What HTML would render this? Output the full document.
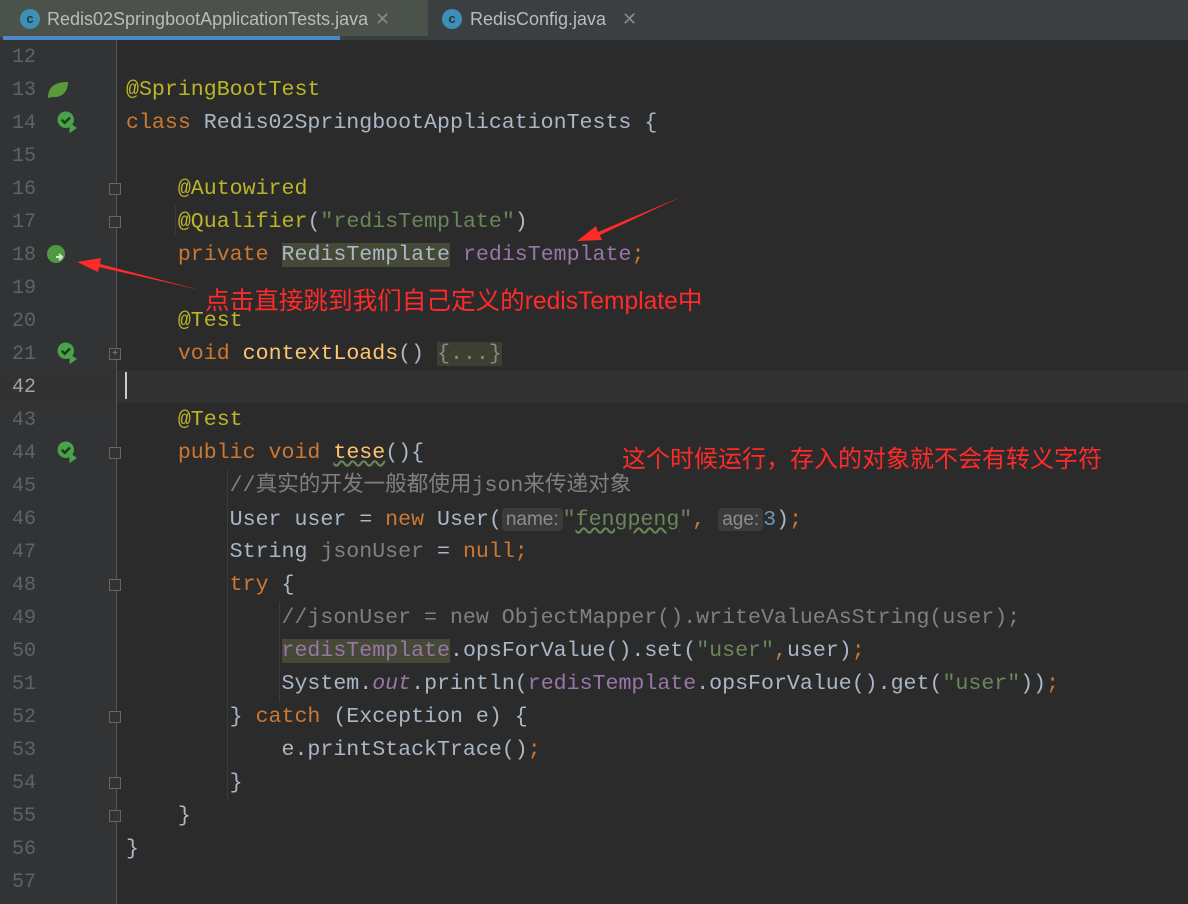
<!DOCTYPE html>
<html><head><meta charset="utf-8"><style>
body{margin:0;width:1188px;height:904px;background:#2b2b2b;overflow:hidden;position:relative;font-family:"Liberation Mono",monospace;}
#tabs{position:absolute;left:0;top:0;width:1188px;height:40px;background:#3c3f41;}
.tab{position:absolute;top:0;height:37px;font:18px "Liberation Sans",sans-serif;color:#bbbbbb;line-height:38px;}
.ic{position:absolute;top:9px;width:20px;height:20px;border-radius:50%;background:#3d8fb5;color:#1e3a4a;font:bold 13px "Liberation Sans";text-align:center;line-height:20px;}
#gut{position:absolute;left:0;top:40px;width:116px;height:864px;background:#313335;}
#div{position:absolute;left:116px;top:40px;width:1px;height:864px;background:#555;}
.ln{position:absolute;left:12px;width:40px;font-size:20px;color:#606366;line-height:33px;height:33px;}
.cl{position:absolute;left:126px;font-size:21.6px;line-height:33px;height:33px;white-space:pre;color:#a9b7c6;}
.k{color:#cc7832}.a{color:#bbb529}.s{color:#6a8759}.f{color:#ffc66d}.p{color:#9876aa}.c{color:#808080}.n{color:#6897bb}
.hint{background:#3b3b3b;color:#8c8c8c;font-family:"Liberation Sans",sans-serif;font-size:19px;border-radius:4px;padding:1px 4px;}
.red{position:absolute;color:#ff2a2a;font:24px "Liberation Sans","Noto Sans CJK SC",sans-serif;white-space:nowrap;}
.fold{position:absolute;left:109px;width:12px;height:12px;border:1px solid #666;box-sizing:border-box;background:#313335;}
.guide{position:absolute;width:1px;background:#3b3b3b;}
.run{position:absolute;left:56px;width:24px;height:24px;}
</style></head><body>
<div id="tabs">
 <div class="tab" style="left:0;width:428px;background:#4b514b;"><div class="ic" style="left:20px">c</div><span style="position:absolute;left:47px">Redis02SpringbootApplicationTests.java</span><span style="position:absolute;left:375px;color:#888">✕</span></div>
 <div style="position:absolute;left:3px;top:36px;width:337px;height:4px;background:#4a88c7"></div>
 <div class="tab" style="left:340px;width:300px;"><div class="ic" style="left:102px">c</div><span style="position:absolute;left:130px">RedisConfig.java</span><span style="position:absolute;left:282px;color:#888">✕</span></div>
</div>
<div style="position:absolute;left:340px;top:36px;width:848px;height:4px;background:#3c3f41"></div>
<div id="gut"></div>
<div style="position:absolute;left:0;top:370px;width:1188px;height:33px;background:#323232"></div>
<div id="div"></div>
<div style="position:absolute;left:125px;top:372px;width:2px;height:27px;background:#ccc"></div>
<div class="guide" style="left:175px;top:205px;height:30px"></div>
<div class="guide" style="left:227px;top:470px;height:330px"></div>
<div class="guide" style="left:279px;top:602px;height:100px"></div>
<div class="guide" style="left:227px;top:736px;height:40px"></div>

<div class="ln" style="top:41px">12</div><div class="ln" style="top:74px">13</div><div class="ln" style="top:107px">14</div><div class="ln" style="top:140px">15</div><div class="ln" style="top:173px">16</div><div class="ln" style="top:206px">17</div><div class="ln" style="top:239px">18</div><div class="ln" style="top:272px">19</div><div class="ln" style="top:305px">20</div><div class="ln" style="top:338px">21</div><div class="ln" style="top:371px;color:#a4a3a3">42</div><div class="ln" style="top:404px">43</div><div class="ln" style="top:437px">44</div><div class="ln" style="top:470px">45</div><div class="ln" style="top:503px">46</div><div class="ln" style="top:536px">47</div><div class="ln" style="top:569px">48</div><div class="ln" style="top:602px">49</div><div class="ln" style="top:635px">50</div><div class="ln" style="top:668px">51</div><div class="ln" style="top:701px">52</div><div class="ln" style="top:734px">53</div><div class="ln" style="top:767px">54</div><div class="ln" style="top:800px">55</div><div class="ln" style="top:833px">56</div><div class="ln" style="top:866px">57</div>

<svg style="position:absolute;left:46px;top:80px" width="24" height="20"><path d="M2 18 C2 6 10 2 22 2 C22 12 16 18 6 17 Z" fill="#5a9a3c"/></svg>
<svg class="run" style="top:110px" viewBox="0 0 16 16"><circle cx="6.5" cy="6.5" r="5.5" fill="#4aa34a"/><path d="M3.8 6.5l2 2 3.5-3.5" stroke="#1e3a1e" stroke-width="1.6" fill="none"/><path d="M9 8.5l5 3.5-5 3.5z" fill="#4aa34a"/></svg>
<svg class="run" style="top:341px" viewBox="0 0 16 16"><circle cx="6.5" cy="6.5" r="5.5" fill="#4aa34a"/><path d="M3.8 6.5l2 2 3.5-3.5" stroke="#1e3a1e" stroke-width="1.6" fill="none"/><path d="M9 8.5l5 3.5-5 3.5z" fill="#4aa34a"/></svg>
<svg class="run" style="top:440px" viewBox="0 0 16 16"><circle cx="6.5" cy="6.5" r="5.5" fill="#4aa34a"/><path d="M3.8 6.5l2 2 3.5-3.5" stroke="#1e3a1e" stroke-width="1.6" fill="none"/><path d="M9 8.5l5 3.5-5 3.5z" fill="#4aa34a"/></svg>
<svg style="position:absolute;left:46px;top:244px" width="22" height="22"><circle cx="10" cy="10" r="9" fill="#4e9a3e"/><path d="M10 13h6M13 10l3 3-3 3" stroke="#ddd" stroke-width="2" fill="none"/></svg>

<div class="fold" style="top:183px"></div><div class="fold" style="top:216px"></div>
<div class="fold" style="top:348px;text-align:center;font:10px/10px sans-serif;color:#888">+</div>
<div class="fold" style="top:447px"></div><div class="fold" style="top:579px"></div><div class="fold" style="top:711px"></div><div class="fold" style="top:777px"></div><div class="fold" style="top:810px"></div>

<div class="cl" style="top:74px"><span class="a">@SpringBootTest</span></div>
<div class="cl" style="top:107px"><span class="k">class</span> Redis02SpringbootApplicationTests {</div>
<div class="cl" style="top:173px">    <span class="a">@Autowired</span></div>
<div class="cl" style="top:206px">    <span class="a">@Qualifier</span>(<span class="s">"redisTemplate"</span>)</div>
<div class="cl" style="top:239px">    <span class="k">private</span> <span style="background:#454935">RedisTemplate</span> <span class="p">redisTemplate</span><span class="k">;</span></div>
<div class="cl" style="top:305px">    <span class="a">@Test</span></div>
<div class="cl" style="top:338px">    <span class="k">void</span> <span class="f">contextLoads</span>() <span style="background:#3e3f31;color:#888">{...}</span></div>
<div class="cl" style="top:404px">    <span class="a">@Test</span></div>
<div class="cl" style="top:437px">    <span class="k">public void</span> <span class="f" style="text-decoration:underline wavy #6a8759">tese</span>(){</div>
<div class="cl" style="top:470px">        <span class="c" style="font-family:'Liberation Mono','Noto Sans CJK SC',monospace">//真实的开发一般都使用json来传递对象</span></div>
<div class="cl" style="top:503px">        User user = <span class="k">new</span> User(<span class="hint">name:</span><span class="s">"<span style="text-decoration:underline wavy #6a8759">fengpeng</span>"</span><span class="k">,</span> <span class="hint">age:</span><span class="n">3</span>)<span class="k">;</span></div>
<div class="cl" style="top:536px">        String <span class="c">jsonUser</span> = <span class="k">null;</span></div>
<div class="cl" style="top:569px">        <span class="k">try</span> {</div>
<div class="cl" style="top:602px">            <span class="c">//jsonUser = new ObjectMapper().writeValueAsString(user);</span></div>
<div class="cl" style="top:635px">            <span class="p" style="background:#454935">redisTemplate</span>.opsForValue().set(<span class="s">"user"</span><span class="k">,</span>user)<span class="k">;</span></div>
<div class="cl" style="top:668px">            System.<span class="p" style="font-style:italic">out</span>.println(<span class="p">redisTemplate</span>.opsForValue().get(<span class="s">"user"</span>))<span class="k">;</span></div>
<div class="cl" style="top:701px">        } <span class="k">catch</span> (Exception e) {</div>
<div class="cl" style="top:734px">            e.printStackTrace()<span class="k">;</span></div>
<div class="cl" style="top:767px">        }</div>
<div class="cl" style="top:800px">    }</div>
<div class="cl" style="top:833px">}</div>

<div class="red" style="left:205px;top:281px;font-size:24.6px">点击直接跳到我们自己定义的redisTemplate中</div>
<div class="red" style="left:622px;top:439px">这个时候运行，存入的对象就不会有转义字符</div>
<svg style="position:absolute;left:0;top:0" width="1188" height="904">
<path d="M683 196 L598 232 L596 226 L577 241 L602 240 L600 235 Z" fill="#ff2a2a"/>
<path d="M200 290 L100 264 L101 258 L77 262 L98 272 L99 267 Z" fill="#ff2a2a"/>
</svg>
</body></html>
